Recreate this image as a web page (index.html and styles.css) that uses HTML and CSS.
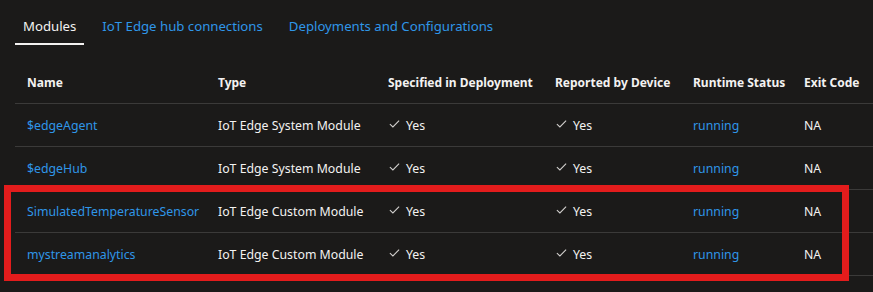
FILE: index.html
```html
<!DOCTYPE html>
<html>
<head>
<meta charset="utf-8">
<link rel="stylesheet" href="styles.css">
</head>
<body>
<div class="page">
  <nav class="tabs">
    <div class="tab active">Modules</div>
    <div class="tab">IoT Edge hub connections</div>
    <div class="tab">Deployments and Configurations</div>
  </nav>
  <div class="table">
    <div class="row head">
      <div class="cell">Name</div>
      <div class="cell">Type</div>
      <div class="cell">Specified in Deployment</div>
      <div class="cell">Reported by Device</div>
      <div class="cell">Runtime Status</div>
      <div class="cell">Exit Code</div>
    </div>
    <div class="row">
      <div class="cell link">$edgeAgent</div>
      <div class="cell">IoT Edge System Module</div>
      <div class="cell"><svg class="check" viewBox="0 0 12 9"><path d="M0.8 4.6 L4.2 7.8 L11.2 0.8"/></svg>Yes</div>
      <div class="cell"><svg class="check" viewBox="0 0 12 9"><path d="M0.8 4.6 L4.2 7.8 L11.2 0.8"/></svg>Yes</div>
      <div class="cell link">running</div>
      <div class="cell">NA</div>
    </div>
    <div class="row">
      <div class="cell link">$edgeHub</div>
      <div class="cell">IoT Edge System Module</div>
      <div class="cell"><svg class="check" viewBox="0 0 12 9"><path d="M0.8 4.6 L4.2 7.8 L11.2 0.8"/></svg>Yes</div>
      <div class="cell"><svg class="check" viewBox="0 0 12 9"><path d="M0.8 4.6 L4.2 7.8 L11.2 0.8"/></svg>Yes</div>
      <div class="cell link">running</div>
      <div class="cell">NA</div>
    </div>
    <div class="row">
      <div class="cell link">SimulatedTemperatureSensor</div>
      <div class="cell">IoT Edge Custom Module</div>
      <div class="cell"><svg class="check" viewBox="0 0 12 9"><path d="M0.8 4.6 L4.2 7.8 L11.2 0.8"/></svg>Yes</div>
      <div class="cell"><svg class="check" viewBox="0 0 12 9"><path d="M0.8 4.6 L4.2 7.8 L11.2 0.8"/></svg>Yes</div>
      <div class="cell link">running</div>
      <div class="cell">NA</div>
    </div>
    <div class="row">
      <div class="cell link">mystreamanalytics</div>
      <div class="cell">IoT Edge Custom Module</div>
      <div class="cell"><svg class="check" viewBox="0 0 12 9"><path d="M0.8 4.6 L4.2 7.8 L11.2 0.8"/></svg>Yes</div>
      <div class="cell"><svg class="check" viewBox="0 0 12 9"><path d="M0.8 4.6 L4.2 7.8 L11.2 0.8"/></svg>Yes</div>
      <div class="cell link">running</div>
      <div class="cell">NA</div>
    </div>
  </div>
  <div class="highlight"></div>
</div>
</body>
</html>
```
FILE: styles.css
```css
html, body {
  margin: 0;
  padding: 0;
  background: #1b1a19;
  overflow: hidden;
}
.page {
  position: relative;
  width: 873px;
  height: 292px;
  font-family: "Noto Sans", "Open Sans", sans-serif;
  color: #f3f2f1;
}
.tabs {
  display: flex;
  gap: 10px;
  padding: 0 0 0 15px;
  height: 45px;
}
.tab {
  font-size: 13.2px;
  line-height: 20px;
  padding: 16px 8px 7px;
  color: #2f96e8;
  white-space: nowrap;
  border-bottom: 2px solid transparent;
  height: 20px;
}
.tab.active {
  color: #f3f2f1;
  border-bottom-color: #f3f2f1;
}
.table {
  margin-left: 15px;
  margin-top: 15px;
}
.row {
  display: grid;
  grid-template-columns: 191px 170px 167px 138px 111px 81px;
  height: 42px;
  border-bottom: 1px solid #3b3a39;
  align-items: center;
  font-size: 12.3px;
}
.row.head {
  height: 41px;
  padding-top: 2px;
  font-weight: 700;
  font-size: 12px;
}
.cell {
  padding-left: 12px;
  white-space: nowrap;
  display: flex;
  align-items: center;
}
.link {
  color: #2f96e8;
}
.check {
  width: 11px;
  height: 8px;
  margin: 0 6px 2px 1px;
  fill: none;
  stroke: #d2d0ce;
  stroke-width: 1.2;
}
.highlight {
  position: absolute;
  left: 4px;
  top: 185px;
  width: 831px;
  height: 82px;
  border: 7px solid #e31c1c;
}
```
